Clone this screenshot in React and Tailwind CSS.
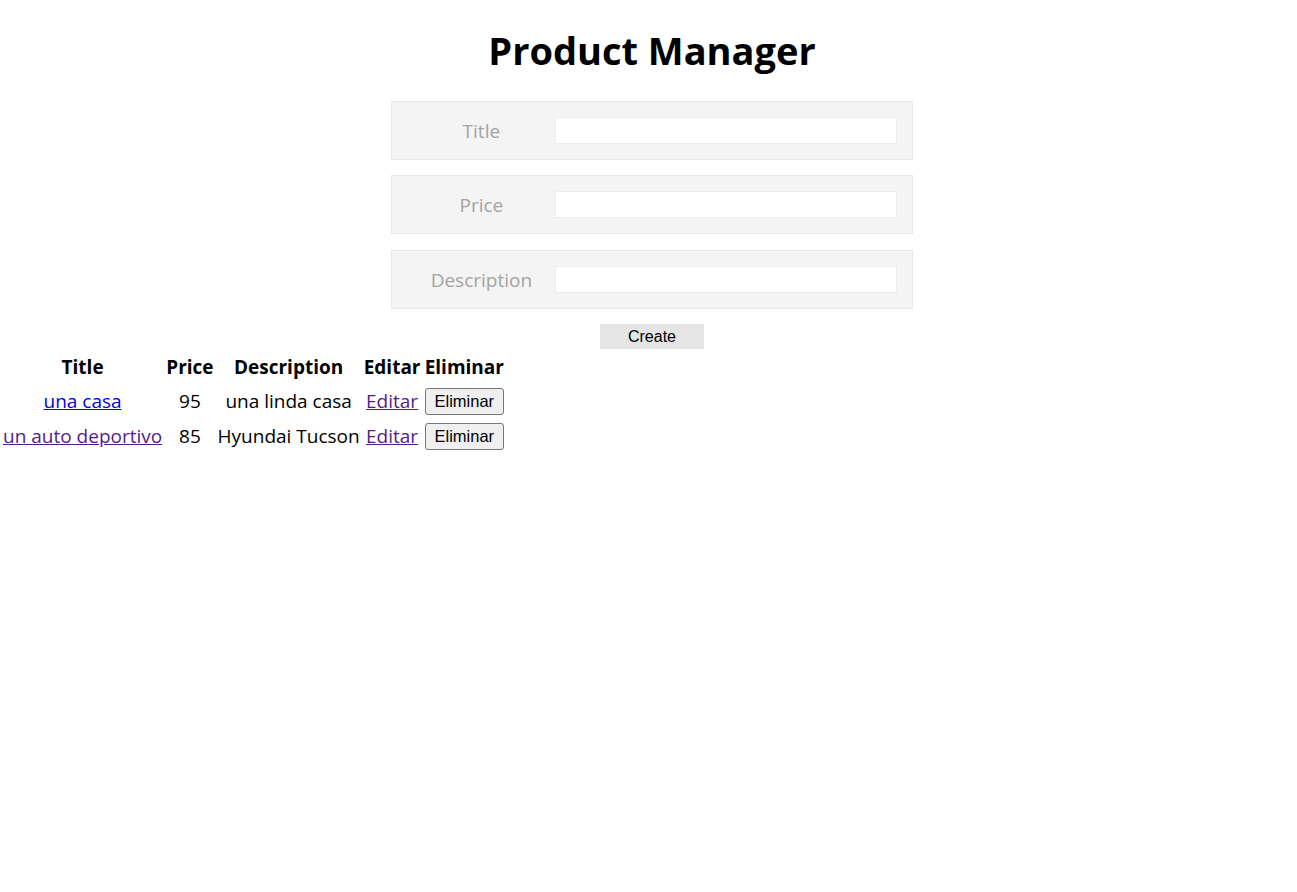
import React, { useState } from 'react';

const products = [
  { id: 1, title: 'una casa', price: 95, description: 'una linda casa', visited: false },
  { id: 2, title: 'un auto deportivo', price: 85, description: 'Hyundai Tucson', visited: true },
];

function Field({ label, value, onChange, className = '' }) {
  return (
    <div className={`flex items-center w-[522px] h-[59px] bg-[#f4f4f4] border border-[#e8e8e8] pl-[19px] pr-[15px] ${className}`}>
      <label className="w-[141px] text-center text-[19px] text-[#a3a3a3] pt-px">{label}</label>
      <input
        className="ml-[3px] w-[343px] h-[27px] bg-white border border-[#ececec] outline-none px-1"
        value={value}
        onChange={(e) => onChange(e.target.value)}
      />
    </div>
  );
}

export default function App() {
  const [title, setTitle] = useState('');
  const [price, setPrice] = useState('');
  const [description, setDescription] = useState('');

  return (
    <div className="min-h-screen bg-white text-black font-['Open_Sans',sans-serif]">
      <div className="flex flex-col items-center pl-[7px] pt-[24px]">
        <h1 className="text-[38px] font-bold leading-[52px]">Product Manager</h1>
        <form className="flex flex-col items-center mt-[25px]" onSubmit={(e) => e.preventDefault()}>
          <Field label="Title" value={title} onChange={setTitle} />
          <Field label="Price" value={price} onChange={setPrice} className="mt-[15px]" />
          <Field label="Description" value={description} onChange={setDescription} className="mt-[16px]" />
          <button className="mt-[15px] w-[104px] h-[25px] bg-[#e5e5e5] font-['Liberation_Sans',sans-serif] text-[16px]">
            Create
          </button>
        </form>
      </div>

      {/* listado */}
      <table className="border-separate border-spacing-[2px] text-[19px] mt-[1px]">
        <thead>
          <tr className="h-[31px]">
            <th className="px-px">Title</th>
            <th className="px-px">Price</th>
            <th className="px-px">Description</th>
            <th className="px-px">Editar</th>
            <th className="px-px">Eliminar</th>
          </tr>
        </thead>
        <tbody>
          {products.map((p) => (
            <tr key={p.id} className="h-[33px]">
              <td className="px-px text-center">
                <a href="#" className={`underline ${p.visited ? 'text-[#551a8b]' : 'text-[#0000ee]'}`}>{p.title}</a>
              </td>
              <td className="px-px text-center">{p.price}</td>
              <td className="px-px text-center">{p.description}</td>
              <td className="px-px text-center">
                <a href="#" className="underline text-[#551a8b]">Editar</a>
              </td>
              <td className="px-px text-center leading-none">
                <button className="align-middle h-[27px] px-[9px] bg-[#efefef] border border-[#767676] rounded-[3px] font-['Liberation_Sans',sans-serif] text-[16.5px]">
                  Eliminar
                </button>
              </td>
            </tr>
          ))}
        </tbody>
      </table>
    </div>
  );
}
